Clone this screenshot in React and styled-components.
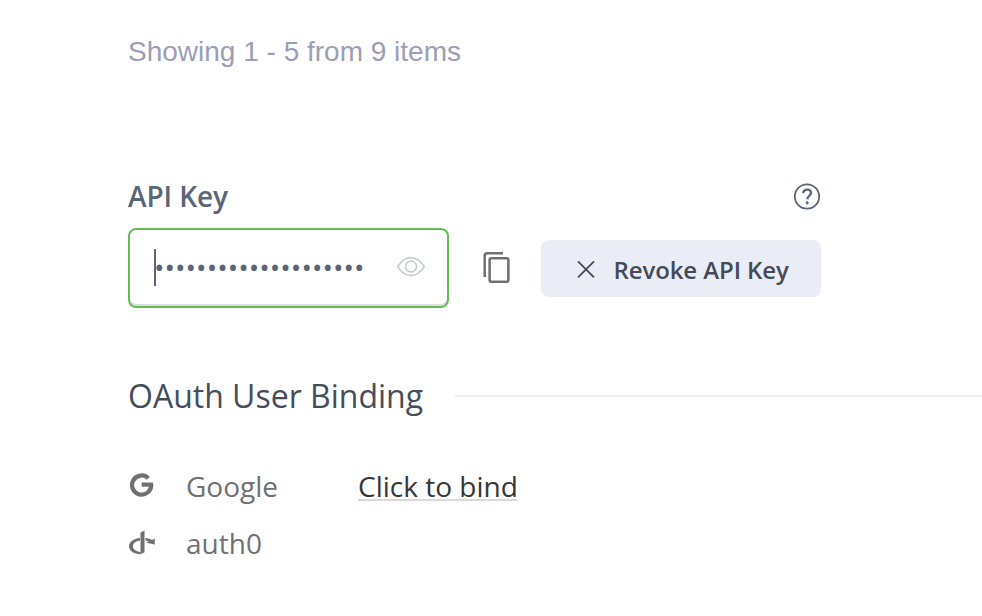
import React from "react";
import styled, { createGlobalStyle } from "styled-components";

const GlobalStyle = createGlobalStyle`
  *, *::before, *::after { box-sizing: border-box; }
  body { margin: 0; background: #fff; font-family: "Open Sans", sans-serif; font-size: 28px; overflow: hidden; }
`;

const Page = styled.main`
  display: flex;
  flex-direction: column;
  width: 982px;
  height: 616px;
  padding: 32px 0 0 128px;
  overflow: hidden;
`;

const Summary = styled.p`
  margin: 0;
  height: 40px;
  line-height: 40px;
  font-family: "Liberation Sans", Arial, sans-serif;
  color: #9c9eb6;
  white-space: nowrap;
`;

const KeySection = styled.section`
  width: 693px;
  margin-top: 104px;
`;

const KeyHeader = styled.div`
  display: flex;
  align-items: center;
  justify-content: space-between;
  height: 40px;
  margin-bottom: 12px;
`;

const Label = styled.label`
  font-weight: 600;
  line-height: 40px;
  letter-spacing: -0.1px;
  color: #5a6678;
`;

const KeyRow = styled.div`
  display: flex;
  align-items: center;
  height: 80px;
`;

const KeyField = styled.div`
  display: flex;
  align-items: center;
  width: 321px;
  height: 80px;
  padding: 0 22px 2px 24px;
  border: 2px solid #67bc57;
  border-radius: 8px;
  box-shadow: inset 0 -2px 0 #dcdcdc;
`;

const Caret = styled.span`
  width: 2px;
  height: 37px;
  background: #5a6678;
`;

const Secret = styled.span`
  flex: 1;
  margin-left: -2px;
  line-height: 38px;
  color: #5a6678;
  white-space: nowrap;
`;

const IconButton = styled.button`
  display: flex;
  padding: 0;
  border: 0;
  background: none;
  color: ${(p) => p.$color};
`;

const CopyButton = styled(IconButton)`
  margin: 0 31px 1px 33px;
`;

const RevokeButton = styled.button`
  display: flex;
  align-items: center;
  gap: 19px;
  width: 280px;
  height: 57px;
  margin-top: 1px;
  padding: 0 0 0 35.5px;
  border: 0;
  border-radius: 8px;
  background: #eaedf5;
  color: #454a58;
  font: 600 24px/57px "Open Sans", sans-serif;
  letter-spacing: -0.1px;
  white-space: nowrap;
`;

const ButtonText = styled.span`
  padding-top: 2px;
`;

const SectionHeader = styled.div`
  display: flex;
  align-items: center;
  gap: 32px;
  height: 48px;
  margin-top: 64px;
`;

const SectionTitle = styled.h2`
  margin: 0;
  font-size: 32px;
  font-weight: 400;
  line-height: 48px;
  color: #454d5d;
  white-space: nowrap;
`;

const Rule = styled.span`
  flex: 1;
  height: 2px;
  background: #f1f1f4;
`;

const Providers = styled.ul`
  margin: 38px 0 0;
  padding: 0;
  list-style: none;
`;

const Provider = styled.li`
  display: grid;
  grid-template-columns: 58px 172px auto;
  align-items: center;
  justify-content: start;
  height: 57px;
  color: #707070;
`;

const ProviderName = styled.span`
  padding-bottom: 2px;
  line-height: 38px;
`;

const BindLink = styled.a`
  height: 27px;
  margin-bottom: 1px;
  line-height: 28px;
  border-bottom: 2px solid #d9d9d9;
  box-sizing: content-box;
  color: #363636;
  white-space: nowrap;
`;

const HelpIcon = () => (
  <svg width="28" height="28" viewBox="0 0 28 28" fill="none" stroke="currentColor">
    <circle cx="14" cy="14.5" r="12.2" strokeWidth="1.8" />
    <path d="M10.2 11.2c0-2.2 1.6-3.6 3.9-3.6s3.9 1.4 3.9 3.4c0 2.6-3.7 3-3.7 6.2" strokeWidth="2.3" />
    <circle cx="14.2" cy="20.7" r="1.5" fill="currentColor" stroke="none" />
  </svg>
);

const EyeIcon = () => (
  <svg width="28" height="20" viewBox="0 0 28 20" fill="none" stroke="currentColor" strokeWidth="1.5">
    <path d="M.8 9.6C4.2 3.8 8.6 .8 14 .8S23.8 3.8 27.2 9.6C23.8 15.4 19.4 18.4 14 18.4S4.2 15.4.8 9.6z" />
    <circle cx="14" cy="9.6" r="5.5" />
  </svg>
);

const CopyIcon = () => (
  <svg width="28" height="32" viewBox="0 0 28 32" fill="none" stroke="currentColor" strokeWidth="2.5">
    <path d="M2.7 25V3.8Q2.7 1.3 5.2 1.3H21" />
    <rect x="7.6" y="6.3" width="18.8" height="23.4" rx="1.6" />
  </svg>
);

const CloseIcon = () => (
  <svg width="18" height="18" viewBox="0 0 18 18" fill="none" stroke="currentColor" strokeWidth="1.8">
    <path d="M1 1.3l16 16M17 1.3L1 17.3" />
  </svg>
);

const GoogleIcon = () => (
  <svg width="28" height="28" viewBox="0 1.7 28 28" fill="none" stroke="currentColor" strokeWidth="4.2">
    <path d="M20.4 7A9.6 9.6 0 1 0 23.2 13.4" />
    <path d="M13.7 13.3H25.1" />
  </svg>
);

const OpenIdIcon = () => (
  <svg width="28" height="28" viewBox="0 0.9 28 28" fill="currentColor">
    <path d="M12.5 3.4L16.5 1.4V23.2L12.5 25.2z" />
    <path d="M12.6 25.2C5.1 24.8 1 21.4 1 17.1C1 12.8 5.6 9.5 12 8.9V11.4C7.8 12.1 4.9 14.2 4.9 17.1C4.9 20 7.9 22.2 12.6 22.9z" />
    <path d="M17.4 8.9C20 9.2 22.2 9.8 24 10.9L26.8 9.4V15.4L18.4 13.6L20.7 12.4C19.7 11.9 18.7 11.6 17.4 11.4z" />
  </svg>
);

export default function App() {
  return (
    <>
      <GlobalStyle />
      <Page>
        <Summary>Showing 1 - 5 from 9 items</Summary>
        <KeySection>
          <KeyHeader>
            <Label>API Key</Label>
            <IconButton $color="#5a6678" aria-label="Help"><HelpIcon /></IconButton>
          </KeyHeader>
          <KeyRow>
            <KeyField>
              <Caret />
              <Secret>{"•".repeat(20)}</Secret>
              <IconButton $color="#c5c8d1" aria-label="Show key"><EyeIcon /></IconButton>
            </KeyField>
            <CopyButton $color="#707070" aria-label="Copy key"><CopyIcon /></CopyButton>
            <RevokeButton>
              <CloseIcon />
              <ButtonText>Revoke API Key</ButtonText>
            </RevokeButton>
          </KeyRow>
        </KeySection>
        <SectionHeader>
          <SectionTitle>OAuth User Binding</SectionTitle>
          <Rule />
        </SectionHeader>
        <Providers>
          <Provider>
            <GoogleIcon />
            <ProviderName>Google</ProviderName>
            <BindLink>Click to bind</BindLink>
          </Provider>
          <Provider>
            <OpenIdIcon />
            <ProviderName>auth0</ProviderName>
          </Provider>
        </Providers>
      </Page>
    </>
  );
}
